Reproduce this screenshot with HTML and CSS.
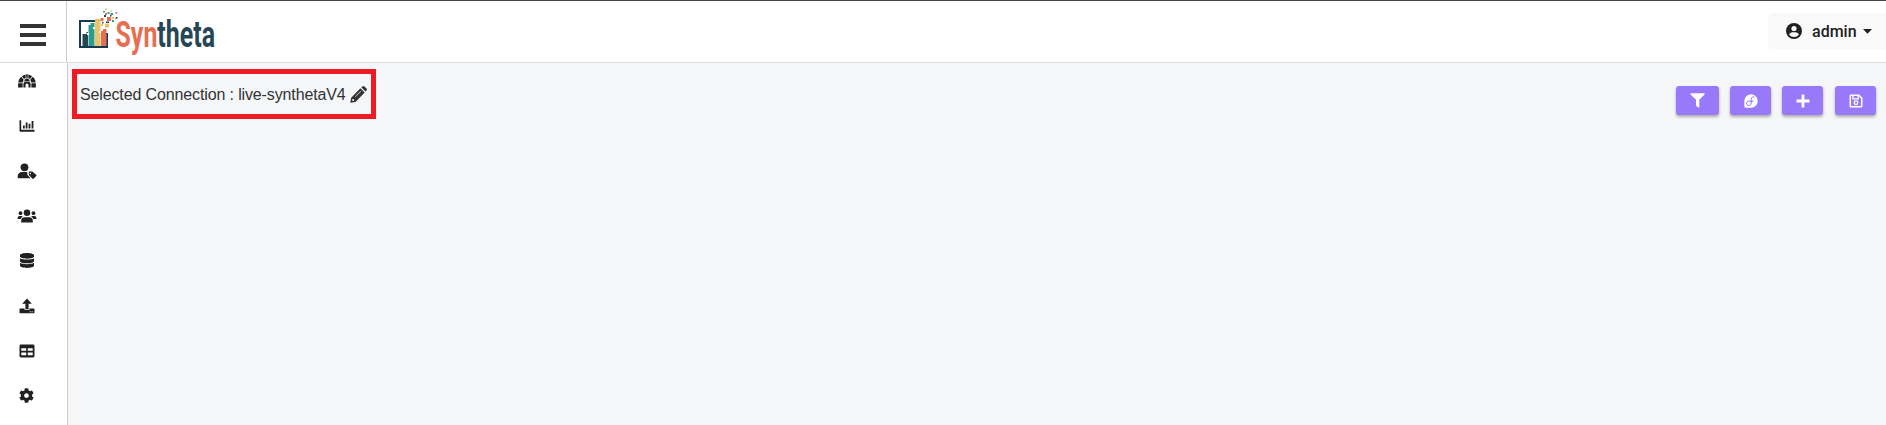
FILE: index.html
```html
<!DOCTYPE html>
<html lang="en">
<head>
<meta charset="utf-8">
<title>Syntheta</title>
<link rel="stylesheet" href="styles.css">
</head>
<body>
<header class="topbar">
  <div class="menu"><div class="burger"><i></i><i></i><i></i></div></div>
  <svg class="logo" width="150" height="55" viewBox="0 0 150 55">
    <path d="M20 14H2v26h27V26" fill="none" stroke="#153a54" stroke-width="2"/>
    <path d="M4.500 27h4v-2h1.500v14H4.500z" fill="#264653"/>
    <path d="M10.500 18h2v-2h4v23h-6z" fill="#2a9d8f"/>
    <path d="M17 12h5.500v27H17z" fill="#e9c46a"/>
    <path d="M23 24h2v-2h3.500v17H23z" fill="#e76f51"/>
    <path d="M9 26h2v2H9zM15 20h2v2h-2zM21 24h2v2h-2z" fill="#fff"/>
    <path d="M22.500 11h3v3h-3zM29 10h4v4h-4zM37.500 5h1.700v1.700h-1.700zM27 6h2v2h-2zM37 10.500h1.500V12H37z" fill="#e76f51"/>
    <path d="M29.500 5h2v2h-2zM32.500 6h2.500v2h-2.500zM34 13h2v2h-2zM25 4h2v1.500h-2z" fill="#2a9d8f"/>
    <path d="M26 8h2v2h-2zM32 8h1.500v1.500H32zM24 15h1.500v1.500H24zM28 14.500h3V16h-3zM38 10h1.500v1.500H38z" fill="#264653"/>
    <path d="M27 1.500h1.800v1.800H27zM27 16.500h4v4h-4zM32.500 3.500H34V5h-1.500zM34 10h2v2h-2zM23 17h2v2h-2z" fill="#e9c46a"/>
    <text class="wordmark" x="37.500" y="39.500" textLength="99.500" lengthAdjust="spacingAndGlyphs"><tspan fill="#e76f51">Syn</tspan><tspan fill="#264653">theta</tspan></text>
  </svg>
  <div class="account">
    <svg width="16" height="16" viewBox="0 0 16 16"><circle cx="8" cy="8" r="8"/><circle cx="8" cy="5.500" r="2.600" fill="#f9f9f9"/><path d="M3 11.500C4.300 9.300 6.200 9.200 8 9.200s3.700.100 5 2.300A6 6 0 0 1 8 14a6 6 0 0 1-5-2.500z" fill="#f9f9f9"/></svg>
    <span>admin</span>
    <svg class="caret" width="9" height="5" viewBox="0 0 9 5"><path d="M0 0h9L4.500 4.800z"/></svg>
  </div>
</header>
<div class="body">
  <nav class="sidebar">
    <a><svg width="18" height="14" viewBox="0 0 18 14"><path d="M.100 13.500V9.300h4.500v4.200zM13.400 13.500V9.300h4.500v4.200zM5.400 13.500V9.600l1-1.600h5.200l1 1.600v3.900h-2.100V11a1.500 1.500 0 0 0-3 0v2.500zM.300 8.500C.600 6.200 1.600 4.200 3.200 2.800l2.500 2.900-1 2.800zM3.900 2.200C4.900 1.300 6.200.700 7.700.400v3.500L6 4.900zM8.200.300h1.600v3.500H8.200zM10.300.400c1.500.300 2.800.900 3.800 1.800L12 4.900l-1.700-1zM14.800 2.800c1.600 1.400 2.600 3.400 2.900 5.700h-4.400l-1-2.800zM6.300 7.400l.300-1.600 1.600-1.200h1.600l1.600 1.200.3 1.600z"/></svg></a>
    <a><svg width="16" height="14" viewBox="0 0 16 14"><path d="M.500 1.300h1.700v9.500h13.300v1.900H1.500a1 1 0 0 1-1-1zM4 6.500h1.800v3H4zM6.700 3.500h1.800v6H6.700zM9.600 4.800h1.800v4.700H9.600zM12.600 2h1.800v7.500h-1.800z"/></svg></a>
    <a><svg width="20" height="16" viewBox="0 0 20 16"><circle cx="7.500" cy="4.300" r="3.900"/><path d="M.700 15.300v-2.100A4.200 4.200 0 0 1 5 9h5.200l.300 3 3.100 3.300z"/><path fill-rule="evenodd" d="M11.800 8.500h3.500l4.100 3.600q.300.600-.100 1L16.500 15.800q-.500.300-1 0L11.800 12zM13.300 9.700a.8.800 0 1 0 0 1.600.8.800 0 0 0 0-1.600z"/></svg></a>
    <a><svg width="20" height="14" viewBox="0 0 20 14"><circle cx="10" cy="3.700" r="3.300"/><circle cx="3.500" cy="4.200" r="1.900"/><circle cx="16.500" cy="4.200" r="1.900"/><path d="M4.200 13.500v-1.600A3.600 3.600 0 0 1 7.800 8.200h4.400a3.600 3.600 0 0 1 3.600 3.700v1.600zM.600 10V8.700A1.900 1.900 0 0 1 2.500 6.900h2.200l1.200.600A5 5 0 0 0 3.700 10zM19.400 10V8.700a1.900 1.900 0 0 0-1.900-1.800h-2.200l-1.200.600a5 5 0 0 1 2.200 2.500z"/></svg></a>
    <a><svg width="14" height="15" viewBox="0 0 448 512" preserveAspectRatio="none"><path d="M448 73.143v45.714C448 159.143 347.667 192 224 192S0 159.143 0 118.857V73.143C0 32.857 100.333 0 224 0s224 32.857 224 73.143zM448 176v102.857C448 319.143 347.667 352 224 352S0 319.143 0 278.857V176c48.125 33.143 136.208 48.572 224 48.572S399.874 209.143 448 176zm0 160v102.857C448 479.143 347.667 512 224 512S0 479.143 0 438.857V336c48.125 33.143 136.208 48.572 224 48.572S399.874 369.143 448 336z"/></svg></a>
    <a><svg width="16" height="16" viewBox="0 0 16 16"><path fill-rule="evenodd" d="M6.400 11V5.700H3.200L8 .500l4.800 5.200H9.600V11zM.500 11.200q0-.700.700-.700h4.300v1.300h5v-1.300h4.300q.700 0 .7.700v3.400q0 .700-.7.700H1.200q-.7 0-.7-.7zM10.700 13.200v1h1v-1zm2 0v1h1v-1z"/></svg></a>
    <a><svg width="16" height="14" viewBox="0 0 16 14"><path fill-rule="evenodd" d="M2 .500h12q1.500 0 1.500 1.400v10.200q0 1.400-1.500 1.400H2Q.500 13.500.500 12.100V1.900Q.500.500 2 .500zM2.300 4.200v2.500h4.900V4.200zm6.500 0v2.500h4.900V4.200zM2.300 8.600v2.700h4.900V8.600zm6.500 0v2.700h4.900V8.600z"/></svg></a>
    <a><svg width="15" height="15" viewBox="0 0 512 512"><path d="M487.400 315.700l-42.600-24.600c4.300-23.200 4.300-47 0-70.200l42.600-24.600c4.900-2.800 7.100-8.600 5.500-14-11.100-35.600-30-67.800-54.700-94.600-3.800-4.100-10-5.100-14.800-2.300L380.800 110c-17.900-15.400-38.500-27.300-60.800-35.100V25.800c0-5.600-3.900-10.500-9.400-11.700-36.700-8.200-74.300-7.800-109.200 0-5.500 1.200-9.400 6.100-9.400 11.700V75c-22.200 7.900-42.800 19.800-60.800 35.100L88.700 85.500c-4.900-2.800-11-1.900-14.800 2.300-24.700 26.700-43.600 58.900-54.700 94.600-1.700 5.400.6 11.200 5.500 14L67.300 221c-4.300 23.200-4.300 47 0 70.200l-42.600 24.600c-4.900 2.800-7.100 8.600-5.500 14 11.100 35.600 30 67.800 54.700 94.600 3.800 4.100 10 5.100 14.800 2.300l42.600-24.600c17.900 15.400 38.500 27.300 60.800 35.100v49.200c0 5.600 3.900 10.500 9.400 11.700 36.700 8.200 74.300 7.800 109.200 0 5.500-1.200 9.400-6.100 9.400-11.700v-49.200c22.200-7.900 42.800-19.800 60.800-35.100l42.600 24.600c4.900 2.800 11 1.900 14.800-2.300 24.700-26.700 43.600-58.900 54.700-94.600 1.500-5.500-.7-11.300-5.600-14.100zM256 336c-44.100 0-80-35.900-80-80s35.900-80 80-80 80 35.900 80 80-35.900 80-80 80z"/></svg></a>
  </nav>
  <main class="content">
    <div class="connection">
      <span>Selected Connection : live-synthetaV4</span>
      <svg width="17" height="17" viewBox="0 0 16 16"><path fill-rule="evenodd" d="M9.800 2.200l4 4L5.200 15 .300 15.700 1.100 11zM2.300 12.200L2 13.400l.7.700 1.200-.3-.1-1.300-1.500-.3zM10 4.700l-5.300 5.300.400.400 5.300-5.300zM10.700 1.400l.9-.9q1-.8 2 0l1.900 1.900q.8 1 0 1.900l-.9.900z"/></svg>
    </div>
    <div class="actions">
      <button class="btn wide"><svg width="15" height="15" viewBox="0 0 15 15"><path d="M.800.300h13.400q.800.300.300 1.100L9.300 6.800v7.500q-.3.600-.9.300L6 12.700V6.800L.500 1.400Q0 .600.800.300z"/></svg></button>
      <button class="btn"><svg width="14" height="14" viewBox="0 0 14 14"><path d="M7 .300A6.700 6.700 0 1 1 7 13.700H1.700Q.300 13.700.300 12.300V7A6.700 6.700 0 0 1 7 .300z"/><path d="M10.600 3.300C8.800 2.300 7.200 3.200 7.200 5v4c0 1.600-1.100 2.500-2.400 2.500S2.500 10.500 2.500 9.300 3.500 7.200 4.800 7.200h4.800" fill="none" stroke="#9677f8" stroke-width="1"/></svg></button>
      <button class="btn"><svg width="14" height="14" viewBox="0 0 14 14"><path d="M5.600.500h2.800v5.100h5.100v2.800H8.400v5.100H5.600V8.400H.500V5.600h5.100z"/></svg></button>
      <button class="btn last"><svg width="14" height="14" viewBox="0 0 14 14"><path fill-rule="evenodd" d="M1.800.600h8.500l3.200 3.200v8.400q0 1.300-1.300 1.300H1.800Q.500 13.500.500 12.200V1.900Q.500.600 1.800.600zM2 2v10h10V4.400L9.800 2v3.400H3.300V2zM4.600 2v2.200h3.900V2z"/><circle cx="7" cy="8.700" r="1.800" fill="none" stroke="#fff" stroke-width="1.300"/></svg></button>
    </div>
  </main>
</div>
</body>
</html>
```
FILE: styles.css
```css
* { box-sizing: border-box; }
body {
  margin: 0;
  height: 425px;
  display: flex;
  flex-direction: column;
  overflow: hidden;
  background: #f4f6f8;
  color: #212121;
  font-family: Roboto, sans-serif;
}
svg { display: block; flex: none; }
.topbar {
  height: 63px;
  flex: none;
  display: flex;
  background: #fff;
  border-top: 1px solid #444;
  border-bottom: 1px solid #dcdcdc;
}
.menu {
  width: 67px;
  padding: 23px 0 0 20px;
  border-right: 1px solid #ccc;
}
.burger { width: 26px; display: grid; gap: 5px; }
.burger i { height: 4px; background: #333; }
.logo { margin: 6px 0 0 11px; }
.wordmark { font: 700 36px Roboto, sans-serif; }
.account {
  width: 118px;
  height: 36px;
  margin: 12px 0 0 auto;
  padding-left: 18px;
  display: flex;
  align-items: center;
  background: #f9f9f9;
  border-radius: 5px 0 0 5px;
  font-size: 16px;
  font-weight: 500;
  fill: #212121;
}
.account span { margin-left: 10px; }
.caret { margin-left: 6px; }
.body { flex: 1; display: flex; min-height: 0; }
.sidebar {
  width: 68px;
  flex: none;
  padding-right: 14px;
  background: #fff;
  border-right: 1px solid #ccc;
}
.sidebar a {
  height: 45px;
  display: flex;
  justify-content: center;
  padding-bottom: 10px;
  align-items: center;
  fill: #212121;
}
.content {
  flex: 1;
  display: flex;
  align-items: flex-start;
  justify-content: space-between;
  padding: 6px 10px 0 4px;
}
.connection {
  width: 304px;
  height: 50px;
  border: 5px solid #ed1c24;
  padding: 1px 0 0 3px;
  display: flex;
  align-items: center;
  gap: 4px;
  font: 16px "Liberation Sans", Arial, sans-serif;
  letter-spacing: -.13px;
  white-space: nowrap;
  fill: #333;
  color: #333;
}
.actions { display: flex; gap: 11px; padding-top: 17px; }
.btn {
  width: 41px;
  height: 29px;
  padding: 0;
  border: 0;
  border-radius: 3px;
  background: #9879f9;
  box-shadow: 0 2px 3px rgba(0, 0, 0, .3);
  display: flex;
  align-items: center;
  justify-content: center;
  fill: #fff;
}
.wide { width: 43px; }
.last { margin-left: 1px; }
```
